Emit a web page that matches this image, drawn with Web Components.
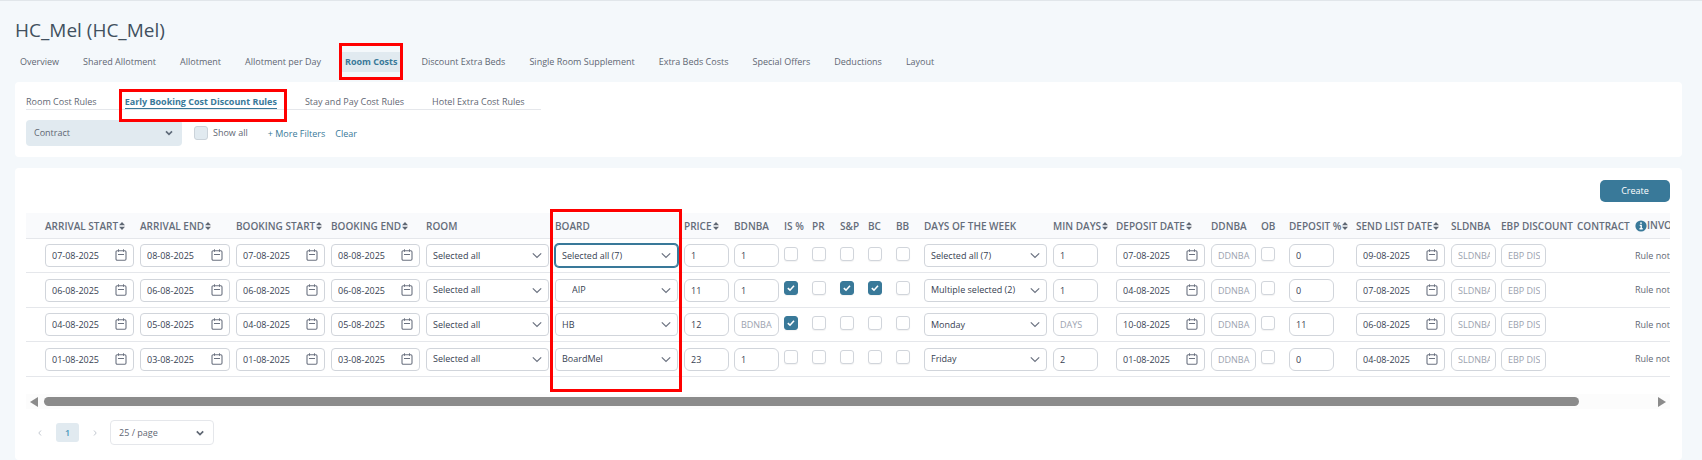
<!DOCTYPE html>
<html lang="en">
<head>
<meta charset="utf-8">
<title>HC_Mel (HC_Mel)</title>
<style>
  body {
    margin: 0;
    background: #f4f8fb;
    color: #5f6773;
    font: 9px/12px "Open Sans", "Noto Sans", sans-serif;
    --accent: #397999;
    --line: #e5e7eb;
    --border: #d1d5db;
    --soft: #e1eaf0;
    --ink: #374151;
    --mark: #ff0000;
  }
</style>
</head>
<body>
<hotel-page>
  <span slot="title">HC_Mel (HC_Mel)</span>
  <tab-bar slot="nav" label="Hotel sections">
    <tab-link>Overview</tab-link>
    <tab-link>Shared Allotment</tab-link>
    <tab-link>Allotment</tab-link>
    <tab-link>Allotment per Day</tab-link>
    <tab-link active marked>Room Costs</tab-link>
    <tab-link>Discount Extra Beds</tab-link>
    <tab-link>Single Room Supplement</tab-link>
    <tab-link>Extra Beds Costs</tab-link>
    <tab-link>Special Offers</tab-link>
    <tab-link>Deductions</tab-link>
    <tab-link>Layout</tab-link>
  </tab-bar>
  <card-panel>
    <tab-bar kind="sub" label="Cost rules">
      <tab-link kind="sub">Room Cost Rules</tab-link>
      <tab-link kind="sub" active marked>Early Booking Cost Discount Rules</tab-link>
      <tab-link kind="sub">Stay and Pay Cost Rules</tab-link>
      <tab-link kind="sub">Hotel Extra Cost Rules</tab-link>
    </tab-bar>
    <filter-bar></filter-bar>
  </card-panel>
  <card-panel grow>
    <tool-bar><action-button>Create</action-button></tool-bar>
    <cost-table></cost-table>
    <scroll-track></scroll-track>
    <page-nav></page-nav>
  </card-panel>
</hotel-page>

<script>
const define = (name, css, html) => {
  const template = document.createElement('template');
  template.innerHTML = `<style>*{box-sizing:border-box}${css}</style>`;
  customElements.define(name, class extends HTMLElement {
    connectedCallback() {
      if (this.shadowRoot) return;
      const root = this.attachShadow({ mode: 'open' });
      root.append(template.content.cloneNode(true));
      const body = document.createElement('template');
      body.innerHTML = typeof html === 'function' ? html(this) : html;
      root.append(body.content.cloneNode(true));
    }
  });
};
const attr = (el, name) => el.getAttribute(name) || '';

define('hotel-page', `
  :host { display: flex; flex-direction: column; min-height: 100vh; border-top: 1px solid #e1e6ea; box-sizing: border-box; padding: 15px 20px 0 15px; }
  h1 { margin: 0; font-size: 19px; line-height: 28px; font-weight: 400; color: #41505e; }
  ::slotted([slot=nav]) { margin: 8px 0 10px; }
  main { display: flex; flex-direction: column; gap: 11px; flex: 1; }
`, `<h1><slot name="title"></slot></h1><slot name="nav"></slot><main><slot></slot></main>`);

define('tab-bar', `
  :host { display: flex; }
  nav { display: flex; gap: 14px; }
  :host([kind=sub]) nav { gap: 28px; padding-right: 16px; border-bottom: 1px solid var(--line); }
`, el => `<nav aria-label="${attr(el, 'label')}"><slot></slot></nav>`);

define('tab-link', `
  :host { display: block; position: relative; }
  a { display: block; padding: 4px 5px; color: inherit; text-decoration: none; border-radius: 2px; white-space: nowrap; }
  :host([active]) a { color: var(--accent); font-weight: 700; background: var(--soft); }
  :host([kind=sub]) a { padding: 0; border-radius: 0; background: none; border-bottom: 1px solid transparent; }
  :host([kind=sub][active]) a { border-bottom-color: var(--accent); }
  :host([marked])::after { content: ""; position: absolute; z-index: 1; inset: -9px -1px -8px; border: 3px solid var(--mark); pointer-events: none; }
  :host([kind=sub][marked])::after { inset: -7px -10px -13px -6px; }
`, `<a href="#"><slot></slot></a>`);

define('card-panel', `
  :host { display: block; background: #fff; border-radius: 4px; padding: 14px 12px 11px 11px; }
  :host([grow]) { flex: 1; padding-top: 12px; }
`, `<slot></slot>`);

define('filter-bar', `
  :host { display: flex; align-items: center; margin-top: 10px; }
  .drop { position: relative; display: flex; width: 156px; height: 26px; }
  select { appearance: none; width: 100%; border: 0; border-radius: 4px; background: var(--soft); color: inherit; font: inherit; padding: 0 8px; }
  svg { position: absolute; right: 8px; top: 8px; width: 10px; height: 10px; pointer-events: none; }
  label { display: flex; align-items: center; gap: 5px; margin: 0 20px 0 12px; }
  input { appearance: none; width: 14px; height: 14px; margin: 0; background: var(--soft); border: 1px solid #cbd3da; border-radius: 3px; }
  a { color: var(--accent); text-decoration: none; margin-right: 10px; padding-top: 2px; }
`, `<span class="drop"><select aria-label="Contract"><option>Contract</option></select>
  <svg viewBox="0 0 10 10" fill="none" stroke="#5f6b7a" stroke-width="1.7"><path d="M2 3.4 5 6.4 8 3.4"/></svg></span>
  <label><input type="checkbox">Show all</label>
  <a href="#">+ More Filters</a><a href="#">Clear</a>`);

define('tool-bar', `:host { display: flex; justify-content: flex-end; margin-bottom: 11px; }`, `<slot></slot>`);

define('action-button', `
  :host { display: block; }
  button { width: 70px; height: 22px; border: 0; border-radius: 5px; background: var(--accent); color: #fff; font: inherit; padding: 0; }
`, `<button type="button"><slot></slot></button>`);

const fieldCss = `
  :host { display: block; position: relative; }
  input, select { appearance: none; display: block; width: 100%; height: 23px; margin: 0; border: 1px solid var(--border); border-radius: 4px; background: #fff; color: var(--ink); font: inherit; padding: 0 5px 0 6px; outline: 0; }
  input::placeholder { color: #9ca3af; opacity: 1; }
  svg { position: absolute; pointer-events: none; }
`;
define('date-field', fieldCss + `svg { right: 7px; top: 5px; width: 12px; height: 12px; }`,
  el => `<input type="text" aria-label="${attr(el, 'label')}" value="${attr(el, 'value')}">
  <svg viewBox="0 0 12 12" fill="none" stroke="#6b7280"><rect x="1" y="1.7" width="10" height="9.6" rx="1.2" stroke-width="1.1"/><path d="M3.5 .3v2.5M8.5 .3v2.5M3 5.5h6"/></svg>`);

define('text-field', fieldCss + `input { border-radius: 6px; }`,
  el => `<input type="text" aria-label="${attr(el, 'label')}" value="${attr(el, 'value')}" placeholder="${attr(el, 'hint')}">`);

define('select-field', fieldCss + `
  svg { right: 7px; top: 7px; width: 10px; height: 9px; }
  :host([indent]) select { padding-left: 16px; }
  :host([focused]) select { border-color: var(--accent); box-shadow: 0 0 0 1px var(--accent); }
`, el => `<select aria-label="${attr(el, 'label')}"><option>${attr(el, 'value')}</option></select>
  <svg viewBox="0 0 10 9" fill="none" stroke="#6b7280" stroke-width="1.2"><path d="M.8 2.3 5 6.5 9.2 2.3"/></svg>`);

define('check-field', `
  :host { display: block; position: relative; width: 14px; height: 14px; }
  input { appearance: none; display: block; width: 14px; height: 14px; margin: 0; border: 1px solid var(--border); border-radius: 3px; background: #fff; box-shadow: 0 1px 1px #0000000d; }
  input:checked { background: var(--accent); border-color: var(--accent); }
  svg { position: absolute; left: 3px; top: 3px; width: 8px; height: 8px; pointer-events: none; }
`, el => `<input type="checkbox" aria-label="${attr(el, 'label')}"${el.hasAttribute('on') ? ' checked' : ''}>` +
  (el.hasAttribute('on') ? `<svg viewBox="0 0 8 8" fill="none" stroke="#fff" stroke-width="1.6"><path d="M.8 4.2 3 6.2 7 1.8"/></svg>` : ''));

const columns = [
  ['Arrival start', 95, 'date', 1], ['Arrival end', 96, 'date', 1], ['Booking start', 95, 'date', 1],
  ['Booking end', 95, 'date', 1], ['Room', 129, 'select'], ['Board', 129, 'select'],
  ['Price', 50, 'text', 1], ['BDNBA', 50, 'text'], ['Is %', 28, 'check'], ['PR', 28, 'check'],
  ['S&amp;P', 28, 'check'], ['BC', 28, 'check'], ['BB', 28, 'check'], ['Days of the week', 129, 'select'],
  ['Min days', 63, 'text', 1], ['Deposit date', 95, 'date', 1], ['DDNBA', 50, 'text'], ['OB', 28, 'check'],
  ['Deposit %', 67, 'text', 1], ['Send list date', 95, 'date', 1], ['SLDNBA', 50, 'text'],
  ['EBP discount', 76, 'text'], ['Contract', 58, 'none'], ['Invoice', 0, 'status']
];
const hints = { BDNBA: 'BDNBA', 'Min days': 'DAYS', DDNBA: 'DDNBA', SLDNBA: 'SLDNBA', 'EBP discount': 'EBP DISCOUNT' };
const rows = [
  ['07-08-2025', '08-08-2025', '07-08-2025', '08-08-2025', 'Selected all', 'Selected all (7)', '1', '1', 0, 0, 0, 0, 0, 'Selected all (7)', '1', '07-08-2025', '', 0, '0', '09-08-2025', '', '', '', 'Rule not'],
  ['06-08-2025', '06-08-2025', '06-08-2025', '06-08-2025', 'Selected all', 'AIP', '11', '1', 1, 0, 1, 1, 0, 'Multiple selected (2)', '1', '04-08-2025', '', 0, '0', '07-08-2025', '', '', '', 'Rule not'],
  ['04-08-2025', '05-08-2025', '04-08-2025', '05-08-2025', 'Selected all', 'HB', '12', '', 1, 0, 0, 0, 0, 'Monday', '', '10-08-2025', '', 0, '11', '06-08-2025', '', '', '', 'Rule not'],
  ['01-08-2025', '03-08-2025', '01-08-2025', '03-08-2025', 'Selected all', 'BoardMel', '23', '1', 0, 0, 0, 0, 0, 'Friday', '2', '01-08-2025', '', 0, '0', '04-08-2025', '', '', '', 'Rule not']
];
const sorter = '<svg class="sort" viewBox="0 0 6 8" fill="#5f6773"><path d="M3 0 6 3.2H0zM3 8 6 4.8H0z"/></svg>';
const info = '<svg class="info" viewBox="0 0 12 12"><circle cx="6" cy="6" r="5.6" fill="#397999"/><path d="M6 2.3v1.7M4.7 5.4h1.5v3.2M4.5 8.7h3.2" stroke="#fff" stroke-width="1.4" fill="none"/></svg>';
const cell = (value, [name, , kind], row) => {
  const label = `label="${name}, row ${row + 1}"`;
  if (kind === 'date') return `<td><date-field ${label} value="${value}"></date-field></td>`;
  if (kind === 'text') return `<td><text-field class="short" ${label} value="${value}" hint="${hints[name] || ''}"></text-field></td>`;
  if (kind === 'check') return `<td class="check"><check-field ${label}${value ? ' on' : ''}></check-field></td>`;
  if (kind === 'select') {
    const state = name === 'Board' ? (row === 0 ? ' focused' : value === 'AIP' ? ' indent' : '') : '';
    return `<td><select-field ${label} value="${value}"${state}></select-field></td>`;
  }
  return `<td class="${kind}">${value}</td>`;
};

define('cost-table', `
  :host { display: block; position: relative; }
  .clip { overflow: hidden; }
  table { table-layout: fixed; width: 1720px; border-collapse: separate; border-spacing: 0; }
  th { height: 26px; padding: 0 0 0 3px; text-align: left; white-space: nowrap; background: #f9fafc; border-bottom: 1px solid var(--line); font-size: 10px; font-weight: 600; line-height: 12px; text-transform: uppercase; color: #656d7a; }
  td { height: 34px; padding: 0 3px; border-bottom: 1px solid var(--line); white-space: nowrap; }
  tr:nth-child(even) td { height: 35px; }
  .short { width: 45px; }
  td.check { padding-bottom: 4px; }
  .sort { width: 6px; height: 8px; margin-left: 1px; }
  .info { width: 12px; height: 12px; vertical-align: -3px; }
  .mark { position: absolute; left: 524px; top: -4px; bottom: -15px; width: 132px; border: 3px solid var(--mark); pointer-events: none; }
`, () => `<div class="clip"><table>
  <colgroup><col style="width:16px">${columns.map(c => `<col${c[1] ? ` style="width:${c[1]}px"` : ''}>`).join('')}</colgroup>
  <thead><tr><th></th>${columns.map(c => `<th scope="col">${c[2] === 'status' ? info : ''}${c[0]}${c[3] ? sorter : ''}</th>`).join('')}</tr></thead>
  <tbody>${rows.map((r, i) => `<tr><td></td>${r.map((v, j) => cell(v, columns[j], i)).join('')}</tr>`).join('')}</tbody>
  </table></div><div class="mark"></div>`);

define('scroll-track', `
  :host { display: flex; align-items: center; gap: 6px; height: 15px; margin-top: 17px; padding: 0 4px; background: #fcfcfc; }
  svg { width: 8px; height: 10px; flex: none; }
  .track { flex: 1; }
  .thumb { width: calc(100% - 73px); height: 9px; border-radius: 5px; background: #8b8b8b; }
`, `<svg viewBox="0 0 8 10" fill="#8b8b8b"><path d="M8 0v10L0 5z"/></svg><div class="track"><div class="thumb"></div></div><svg viewBox="0 0 8 10" fill="#8b8b8b"><path d="M0 0v10l8-5z"/></svg>`);

define('page-nav', `
  :host { display: flex; align-items: center; margin-top: 11px; }
  button { border: 0; padding: 0; font: inherit; background: none; width: 22px; height: 19px; border-radius: 3px; }
  .step { width: 8px; }
  .step svg { display: block; width: 8px; height: 8px; }
  .current { margin: 0 12px; width: 23px; background: var(--soft); color: #4a97bb; font-weight: 600; }
  .prev { margin-left: 10px; }
  .size { position: relative; width: 104px; margin-left: 11px; }
  select { appearance: none; display: block; width: 100%; height: 25px; border: 1px solid var(--line); border-radius: 4px; background: #fff; color: inherit; font: inherit; padding: 0 8px; }
  .size svg { position: absolute; right: 9px; top: 8px; width: 10px; height: 10px; pointer-events: none; }
`, `<button class="step prev" aria-label="Previous page"><svg viewBox="0 0 8 8" fill="none" stroke="#c3c9d1"><path d="M5 1.5 2.8 4 5 6.5"/></svg></button>
  <button class="current">1</button>
  <button class="step" aria-label="Next page"><svg viewBox="0 0 8 8" fill="none" stroke="#c3c9d1"><path d="M3 1.5 5.2 4 3 6.5"/></svg></button>
  <span class="size"><select aria-label="Rows per page"><option>25 / page</option></select>
  <svg viewBox="0 0 10 10" fill="none" stroke="#5f6773" stroke-width="1.7"><path d="M1.8 3.4 5 6.6 8.2 3.4"/></svg></span>`);
</script>
</body>
</html>
